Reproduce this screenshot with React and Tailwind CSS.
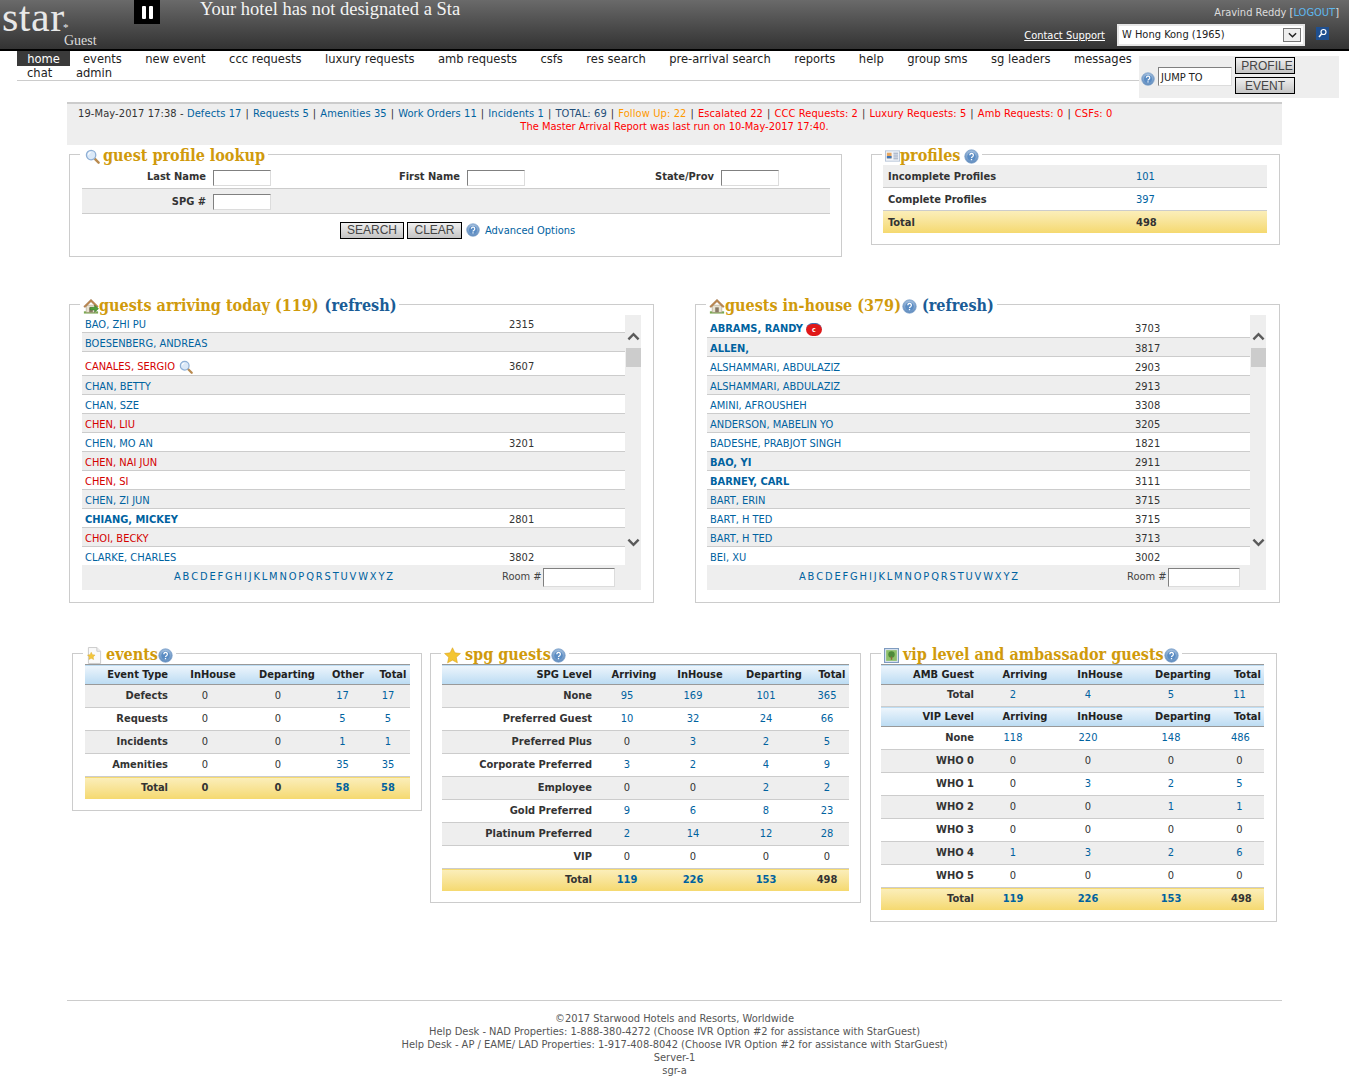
import React from "react";

const sans = "font-['DejaVu_Sans_Condensed','DejaVu_Sans',sans-serif]";
const serif = "font-['DejaVu_Serif_Condensed','DejaVu_Serif',serif]";

function Help({ className = "" }) {
  return (
    <svg viewBox="0 0 16 16" className={"inline-block shrink-0 " + className}>
      <defs>
        <radialGradient id="hg" cx="0.5" cy="0.35" r="0.7">
          <stop offset="0" stopColor="#c4d8ee" />
          <stop offset="1" stopColor="#4f7fb6" />
        </radialGradient>
      </defs>
      <circle cx="8" cy="8" r="7.2" fill="url(#hg)" stroke="#7fa3cc" strokeWidth="0.8" />
      <circle cx="8" cy="8" r="4.6" fill="#5a8cc4" />
      <path d="M6.2 6.6a1.9 1.9 0 1 1 2.9 1.6c-.7.4-1.1.7-1.1 1.5" fill="none" stroke="#fff" strokeWidth="1.3" />
      <rect x="7.3" y="10.6" width="1.4" height="1.4" fill="#fff" />
    </svg>
  );
}

function Magnifier({ className = "" }) {
  return (
    <svg viewBox="0 0 16 16" className={"inline-block shrink-0 " + className}>
      <line x1="10" y1="10" x2="14.5" y2="14.5" stroke="#b98a4e" strokeWidth="2.6" strokeLinecap="round" />
      <circle cx="6.5" cy="6.5" r="5" fill="#dbe9f8" stroke="#8fb0d6" strokeWidth="1.4" />
      <path d="M3.6 6a3 3 0 0 1 2.4-2.4" stroke="#fff" strokeWidth="1.2" fill="none" />
    </svg>
  );
}

function House({ arrow, className = "" }) {
  return (
    <svg viewBox="0 0 18 18" className={"inline-block shrink-0 " + className}>
      <rect x="1" y="15" width="16" height="2.5" fill="#7aa84f" />
      <rect x="3.5" y="8" width="11" height="8" fill="#e8e2d2" stroke="#a89a80" strokeWidth="0.6" />
      <path d="M0.8 9.5 9 1.5l8.2 8-1.4 1.2L9 4.2 2.2 10.7z" fill="#c08a52" stroke="#8e5f33" strokeWidth="0.5" />
      <rect x="7" y="10.5" width="4" height="5.5" fill="#8a7a66" />
      {arrow && <path d="M8 10.5h5V8l4.5 4-4.5 4v-2.5H8z" fill="#4f9e3a" stroke="#2f6e22" strokeWidth="0.5" />}
    </svg>
  );
}

function Card({ className = "" }) {
  return (
    <svg viewBox="0 0 16 14" className={"inline-block shrink-0 " + className}>
      <rect x="0.5" y="1.5" width="15" height="11" fill="#f2f5fa" stroke="#b7c4d8" />
      <rect x="2" y="3.5" width="5" height="6" fill="#e8a860" />
      <rect x="2" y="7" width="5" height="2.5" fill="#3f74b5" />
      <path d="M9 4h5M9 6h5M9 8h5M9 10h5" stroke="#8e9db5" />
    </svg>
  );
}

function DocStar({ className = "" }) {
  return (
    <svg viewBox="0 0 16 18" className={"inline-block shrink-0 " + className}>
      <path d="M1.5.5h9l4 4v13h-13z" fill="#fafafa" stroke="#c9c9c9" />
      <path d="M10.5.5v4h4" fill="#eee" stroke="#c9c9c9" />
      <path d="M4.5 5.5l1.3 2.6 2.8.4-2 2 .5 2.8-2.6-1.3-2.5 1.3.5-2.8-2-2 2.8-.4z" fill="#f3c63c" stroke="#d7a31c" strokeWidth="0.4" />
    </svg>
  );
}

function Star({ className = "" }) {
  return (
    <svg viewBox="0 0 18 18" className={"inline-block shrink-0 " + className}>
      <path d="M9 .8l2.5 5.4 5.9.7-4.4 4 1.2 5.9L9 13.900l-5.2 2.900L5 10.900.6 6.900l5.900-.7z" fill="#f4c531" stroke="#d9a21b" strokeWidth="0.6" />
    </svg>
  );
}

function Pic({ className = "" }) {
  return (
    <svg viewBox="0 0 14 14" className={"inline-block shrink-0 " + className}>
      <rect x="0.5" y="0.5" width="13" height="13" fill="#dce6f2" stroke="#7f9cc0" />
      <rect x="2" y="2" width="10" height="10" fill="#8fc06a" />
      <circle cx="7" cy="6" r="3" fill="#4d8a3a" />
      <rect x="6.3" y="8" width="1.4" height="3" fill="#8a6a3a" />
    </svg>
  );
}

function Chevron({ up }) {
  return (
    <svg viewBox="0 0 14 9" className="w-[13px] h-[9px] block">
      <path d={up ? "M1.5 7.5 7 2l5.5 5.5" : "M1.5 1.5 7 7l5.5-5.5"} fill="none" stroke="#5a5a5a" strokeWidth="2.6" />
    </svg>
  );
}

function Box({ title, className = "", children }) {
  return (
    <fieldset className={"border border-[#cccccc] box-border shrink-0 " + className}>
      <legend className={"ml-[10px] px-[3px] h-[22px] pt-[4px] flex items-center whitespace-nowrap " + serif}>{title}</legend>
      {children}
    </fieldset>
  );
}

const Gold = ({ children, className = "" }) => (
  <span className={"font-bold text-[#d09a0c] text-[16px] leading-[20px] " + className}>{children}</span>
);

function L({ children, c = "text-[#00629f]", className = "" }) {
  return <span className={c + " " + className}>{children}</span>;
}

const Sep = () => <span className="text-[#333] mx-[4px]">|</span>;

const lookupInput = "border border-[#808080] border-r-[#dcdcdc] border-b-[#dcdcdc] bg-white h-[14px] w-[56px] box-content";

function Field({ label }) {
  return (
    <div className="w-[254px] shrink-0 flex items-center pt-[2px]">
      <span className="w-[124px] text-right font-bold text-[#333] mr-[7px]">{label}</span>
      <span className={lookupInput} />
    </div>
  );
}

const btn = "border border-black bg-gradient-to-b from-[#f0f0f0] to-[#c4c4c4] text-[#444] text-[12px] leading-none flex items-center justify-center font-['Liberation_Sans',sans-serif]";

function Rows({ data, nameW }) {
  return (
    <div className="flex-1 overflow-hidden h-[250px]">
      {data.map((r, i) => (
        <div
          key={i}
          className={"flex items-center border-b border-[#cccccc] box-border pl-[3px] " + (i % 2 ? "bg-[#eeeeee]" : "bg-white")}
          style={{ height: r.h || 19, paddingTop: r.pt === undefined ? 5 : r.pt }}
        >
          <div style={{ width: nameW }} className={"flex items-center shrink-0 " + (r.red ? "text-[#d40000]" : "text-[#00629f]") + (r.b ? " font-bold" : "")}>
            {r.n}
            {r.mag && <Magnifier className="w-[14px] h-[14px] ml-[4px]" />}
            {r.c && (
              <span className="ml-[3px] w-[16px] h-[13px] rounded-full bg-[#e01818] text-white text-[7px] leading-[13px] text-center font-bold border-t border-[#3f74b5]">c</span>
            )}
          </div>
          <div className="text-[#333]">{r.r}</div>
        </div>
      ))}
    </div>
  );
}

function Scroll() {
  return (
    <div className="w-[16px] bg-[#eeeeee] flex flex-col items-center pt-[17px] pb-[18px] h-[250px]">
      <Chevron up />
      <div className="w-[15px] h-[19px] bg-[#cccccc] mt-[7px]" />
      <div className="mt-auto"><Chevron /></div>
    </div>
  );
}

function ListBox({ title, data, nameW, inner = "ml-[12px]" }) {
  return (
    <Box title={title} className="w-[585px] h-[310px]">
      <div className={inner + " w-[559px]"}>
        <div className="flex">
          <Rows data={data} nameW={nameW} />
          <Scroll />
        </div>
        <div className="h-[25px] bg-[#eeeeee] flex items-center text-[#333]">
          <div className="ml-[92px] w-[328px] flex text-[#00629f] text-[11px] [word-spacing:-1.3px]">
            A B C D E F G H I J K L M N O P Q R S T U V W X Y Z
          </div>
          <span className="text-[#444] w-[41px]">Room #</span>
          <span className="border border-[#808080] border-r-[#dcdcdc] border-b-[#dcdcdc] bg-white h-[17px] w-[70px] box-content" />
        </div>
      </div>
    </Box>
  );
}

const head = "bg-gradient-to-b from-[#edf5fc] to-[#bcdcf3] border-t border-b border-[#999999] box-border";
const body = "border-b border-[#cccccc] box-border";
const total = "bg-gradient-to-b from-[#fbeeb9] to-[#f5d96f] border-t border-[#999999] box-border";

function Stat({ widths, pads, rows, className = "" }) {
  return (
    <table className={"table-fixed border-collapse " + className} style={{ width: widths.reduce((a, b) => a + b, 0) }}>
      <colgroup>
        {widths.map((w, i) => <col key={i} style={{ width: w }} />)}
      </colgroup>
      <tbody>
        {rows.map((r, i) => {
          if (r.head) {
            return (
              <tr key={i} className={head} style={{ height: 20 }}>
                {r.head.map((c, j) => (
                  <td key={j} className={(j ? "text-center" : "text-right") + " font-bold text-[#222] p-0 pt-[2px]"} style={j ? {} : { paddingRight: pads[0] }}>{c}</td>
                ))}
              </tr>
            );
          }
          return (
            <tr key={i} className={r.total ? total : body + (r.alt ? " bg-[#eeeeee]" : " bg-white")} style={{ height: r.total ? 22 : r.h || 23 }}>
              {r.v.map((c, j) => {
                const dark = j === 0 || c === "0" || (r.dark && j === r.v.length - 1);
                return (
                  <td
                    key={j}
                    className={(j ? "text-center " : "text-right ") + "p-0 " + (j === 0 || r.total ? "font-bold " : "") + (dark ? "text-[#333]" : "text-[#00629f]")}
                    style={{ paddingRight: pads[j] }}
                  >
                    {c}
                  </td>
                );
              })}
            </tr>
          );
        })}
      </tbody>
    </table>
  );
}

const arriving = [
  { n: "BAO, ZHI PU", r: "2315", h: 18, pt: 3 },
  { n: "BOESENBERG, ANDREAS" },
  { n: "CANALES, SERGIO", r: "3607", red: 1, mag: 1, h: 24, pt: 7 },
  { n: "CHAN, BETTY" },
  { n: "CHAN, SZE" },
  { n: "CHEN, LIU", red: 1 },
  { n: "CHEN, MO AN", r: "3201" },
  { n: "CHEN, NAI JUN", red: 1 },
  { n: "CHEN, SI", red: 1 },
  { n: "CHEN, ZI JUN" },
  { n: "CHIANG, MICKEY", r: "2801", b: 1 },
  { n: "CHOI, BECKY", red: 1 },
  { n: "CLARKE, CHARLES", r: "3802" },
];

const inhouse = [
  { n: "ABRAMS, RANDY", r: "3703", b: 1, c: 1, h: 23, pt: 7 },
  { n: "ALLEN,", r: "3817", b: 1 },
  { n: "ALSHAMMARI, ABDULAZIZ", r: "2903" },
  { n: "ALSHAMMARI, ABDULAZIZ", r: "2913" },
  { n: "AMINI, AFROUSHEH", r: "3308" },
  { n: "ANDERSON, MABELIN YO", r: "3205" },
  { n: "BADESHE, PRABJOT SINGH", r: "1821" },
  { n: "BAO, YI", r: "2911", b: 1 },
  { n: "BARNEY, CARL", r: "3111", b: 1 },
  { n: "BART, ERIN", r: "3715" },
  { n: "BART, H TED", r: "3715" },
  { n: "BART, H TED", r: "3713" },
  { n: "BEI, XU", r: "3002" },
];

const navTop = ["events", "new event", "ccc requests", "luxury requests", "amb requests", "csfs", "res search", "pre-arrival search", "reports", "help", "group sms", "sg leaders"];

const red = "text-[#ff0000]";

export default function App() {
  return (
    <div className={"w-[1349px] h-[1086px] bg-white text-[11px] overflow-hidden " + sans}>
      <header className="h-[51px] bg-gradient-to-b from-[#6a6a6a] to-[#333333] border-b-2 border-black box-border flex">
        <div className="w-[134px] pl-[2px] text-[#e8e8e8] font-['Liberation_Serif',serif] relative">
          <div className="text-[42px] leading-[34px] tracking-[0.5px]">star</div>
          <span className="absolute left-[63px] top-[22px] text-[11px] leading-[11px]">*</span>
          <div className="ml-[62px] mt-[-1px] text-[14px] leading-[16px] text-[#ddd]">Guest</div>
        </div>
        <div className="w-[26px] h-[24px] bg-black flex items-center justify-center gap-[3px]">
          <span className="w-[4px] h-[13px] bg-white rounded-[1px]" />
          <span className="w-[4px] h-[13px] bg-white rounded-[1px]" />
        </div>
        <div className="ml-[40px] text-[18.5px] leading-[18px] text-[#f4f4f4] font-['Liberation_Serif',serif]">Your hotel has not designated a Sta</div>
        <div className="ml-auto pr-[10px] flex flex-col items-end">
          <div className="mt-[6px] h-[14px] leading-[14px] text-[#dddddd]">Aravind Reddy [<span className="text-[#5fb8ee]">LOGOUT</span>]</div>
          <div className="flex items-center mt-[4px] h-[22px]">
            <span className="text-white underline mr-[12px] pt-[2px]">Contact Support</span>
            <div className="w-[188px] h-[22px] bg-white border-2 border-[#e6e6e6] box-border flex items-center justify-between pl-[3px] pr-[2px] text-[#222]">
              W Hong Kong (1965)
              <span className="w-[18px] h-[14px] border border-[#777] bg-[#eeeeee] flex items-center justify-center">
                <svg viewBox="0 0 10 6" className="w-[9px] h-[6px]"><path d="M1 1l4 4 4-4" fill="none" stroke="#222" strokeWidth="1.6" /></svg>
              </span>
            </div>
            <svg viewBox="0 0 13 13" className="w-[13px] h-[13px] ml-[11px] mr-[10px] mb-[4px]">
              <rect width="13" height="13" fill="#1f4f8f" />
              <circle cx="7.5" cy="5" r="2.5" fill="none" stroke="#fff" strokeWidth="1.2" />
              <path d="M5.5 7L3 10" stroke="#fff" strokeWidth="1.5" />
            </svg>
          </div>
        </div>
      </header>

      <div className="flex">
        <nav className="ml-[17px] w-[1122px] h-[30px] border-b border-[#cccccc] box-border flex flex-wrap content-start text-[#222] text-[12.8px] leading-[14px]">
          <span className="w-[53px] h-[15px] leading-[16px] bg-[#3a3a3a] text-white text-center mr-[3px]">home</span>
          {navTop.map((t) => (
            <span key={t} className="h-[15px] leading-[16px] px-[10px] mr-[3.5px]">{t}</span>
          ))}
          <span className="h-[15px] leading-[16px] pl-[10px]">messages</span>
          <span className="basis-full h-0" />
          <span className="w-[59px] pl-[10px]">chat</span>
          <span>admin</span>
        </nav>
        <div className="w-[200px] h-[42px] mt-[5px] bg-[#eeeeee] flex items-start pl-[2px] pt-[1px]">
          <Help className="w-[14px] h-[14px] mt-[15px]" />
          <span className="ml-[3px] mt-[10px] border border-[#808080] border-r-[#dcdcdc] border-b-[#dcdcdc] w-[70px] h-[17px] bg-white pl-[2px] leading-[20px] text-[#222] box-content">JUMP TO</span>
          <div className="ml-[3px] flex flex-col gap-[3px]">
            <span className={btn + " w-[60px] h-[17px] pl-[4px]"}>PROFILE</span>
            <span className={btn + " w-[60px] h-[17px]"}>EVENT</span>
          </div>
        </div>
      </div>

      <div className="ml-[67px] w-[1215px] h-[43px] mt-[4px] bg-[#eeeeee] border-t-2 border-[#cccccc] box-border text-center pt-[3px] leading-[13px]">
        <div className="text-left pl-[11px] text-[#333] whitespace-pre tracking-[0.11px]">
          19-May-2017 17:38 - <L>Defects 17</L><Sep /><L>Requests 5</L><Sep /><L>Amenities 35</L><Sep /><L>Work Orders 11</L><Sep /><L>Incidents 1</L><Sep />
          <L c="text-[#1f4e79]">TOTAL: 69</L><Sep /><L c="text-[#ff9900]">Follow Up: 22</L><Sep /><L c={red}>Escalated 22</L><Sep /><L c={red}>CCC Requests: 2</L><Sep /><L c={red}>Luxury Requests: 5</L><Sep /><L c={red}>Amb Requests: 0</L><Sep /><L c={red}>CSFs: 0</L>
        </div>
        <div className={red}>The Master Arrival Report was last run on 10-May-2017 17:40.</div>
      </div>

      <div className="flex ml-[69px] -mt-[2px]">
        <Box
          className="w-[773px] h-[114px]"
          title={<><Magnifier className="w-[15px] h-[15px] ml-[2px] mr-[3px]" /><Gold>guest profile lookup</Gold></>}
        >
          <div className="ml-[12px] w-[748px]">
            <div className="h-[24px] border-b border-[#cccccc] box-border flex items-center">
              <Field label="Last Name" />
              <Field label="First Name" />
              <Field label="State/Prov" />
            </div>
            <div className="h-[25px] bg-[#eeeeee] border-b border-[#cccccc] box-border flex items-center">
              <Field label="SPG #" />
            </div>
            <div className="flex items-center mt-[7px] ml-[258px]">
              <span className={btn + " w-[64px] h-[17px]"}>SEARCH</span>
              <span className={btn + " w-[55px] h-[17px] ml-[3px]"}>CLEAR</span>
              <Help className="w-[14px] h-[14px] ml-[4px] mr-[5px]" />
              <L className="pt-[2px]">Advanced Options</L>
            </div>
          </div>
        </Box>

        <Box
          className="ml-[29px] w-[409px] h-[102px]"
          title={<><Card className="w-[15px] h-[14px]" /><Gold>profiles</Gold><Help className="w-[15px] h-[15px] ml-[4px]" /></>}
        >
          <div className="ml-[11px] w-[384px]">
            <div className="h-[23px] pt-[2px] bg-[#eeeeee] border-b border-[#cccccc] box-border flex items-center pl-[5px]"><span className="w-[248px] font-bold text-[#333]">Incomplete Profiles</span><L>101</L></div>
            <div className="h-[23px] pt-[2px] bg-white border-b border-[#cccccc] box-border flex items-center pl-[5px]"><span className="w-[248px] font-bold text-[#333]">Complete Profiles</span><L>397</L></div>
            <div className="h-[22px] pt-[2px] bg-gradient-to-b from-[#fbeeb9] to-[#f5d96f] flex items-center pl-[5px] font-bold text-[#333]"><span className="w-[248px]">Total</span>498</div>
          </div>
        </Box>
      </div>

      <div className="flex ml-[69px] mt-[36px]">
        <ListBox
          nameW={424}
          data={arriving}
          title={<><House arrow className="w-[16px] h-[16px]" /><Gold>guests arriving today (119)</Gold><span className="ml-[6px] font-bold text-[16px] text-[#1a5c96]">(refresh)</span></>}
        />
        <div className="w-[41px] shrink-0" />
        <ListBox
          nameW={425}
          inner="ml-[11px]"
          data={inhouse}
          title={<><House className="w-[16px] h-[16px]" /><Gold>guests in-house (379)</Gold><Help className="w-[15px] h-[15px] ml-[1px]" /><span className="ml-[5px] font-bold text-[16px] text-[#1a5c96]">(refresh)</span></>}
        />
      </div>

      <div className="flex items-start mt-[39px] ml-[72px]">
        <Box
          className="w-[350px] h-[169px]"
          title={<><DocStar className="w-[15px] h-[17px] ml-[1px] mr-[4px]" /><Gold>events</Gold><Help className="w-[15px] h-[15px]" /></>}
        >
          <Stat
            className="ml-[12px]"
            widths={[87, 82, 66, 56, 34]}
            pads={[4, 16, 18, 11, 10]}
            rows={[
              { head: ["Event Type", "InHouse", "Departing", "Other", "Total"] },
              { alt: 1, v: ["Defects", "0", "0", "17", "17"] },
              { v: ["Requests", "0", "0", "5", "5"] },
              { alt: 1, v: ["Incidents", "0", "0", "1", "1"] },
              { v: ["Amenities", "0", "0", "35", "35"] },
              { total: 1, v: ["Total", "0", "0", "58", "58"] },
            ]}
          />
        </Box>
        <Box
          className="ml-[8px] w-[431px] h-[261px]"
          title={<><Star className="w-[17px] h-[17px] mr-[4px]" /><Gold>spg guests</Gold><Help className="w-[15px] h-[15px]" /></>}
        >
          <Stat
            className="ml-[11px]"
            widths={[159, 66, 66, 82, 34]}
            pads={[9, 14, 14, 16, 10]}
            rows={[
              { head: ["SPG Level", "Arriving", "InHouse", "Departing", "Total"] },
              { alt: 1, v: ["None", "95", "169", "101", "365"] },
              { v: ["Preferred Guest", "10", "32", "24", "66"] },
              { alt: 1, v: ["Preferred Plus", "0", "3", "2", "5"] },
              { v: ["Corporate Preferred", "3", "2", "4", "9"] },
              { alt: 1, v: ["Employee", "0", "0", "2", "2"] },
              { v: ["Gold Preferred", "9", "6", "8", "23"] },
              { alt: 1, v: ["Platinum Preferred", "2", "14", "12", "28"] },
              { v: ["VIP", "0", "0", "0", "0"] },
              { total: 1, dark: 1, v: ["Total", "119", "226", "153", "498"] },
            ]}
          />
        </Box>
        <Box
          className="ml-[9px] w-[407px] h-[280px]"
          title={<><Pic className="w-[15px] h-[15px] mr-[4px]" /><Gold>vip level and ambassador guests</Gold><Help className="w-[15px] h-[15px]" /></>}
        >
          <Stat
            className="ml-[10px]"
            widths={[104, 80, 70, 96, 33]}
            pads={[11, 24, 24, 24, 16]}
            rows={[
              { head: ["AMB Guest", "Arriving", "InHouse", "Departing", "Total"] },
              { alt: 1, h: 22, v: ["Total", "2", "4", "5", "11"] },
              { head: ["VIP Level", "Arriving", "InHouse", "Departing", "Total"] },
              { v: ["None", "118", "220", "148", "486"] },
              { alt: 1, v: ["WHO 0", "0", "0", "0", "0"] },
              { v: ["WHO 1", "0", "3", "2", "5"] },
              { alt: 1, v: ["WHO 2", "0", "0", "1", "1"] },
              { v: ["WHO 3", "0", "0", "0", "0"] },
              { alt: 1, v: ["WHO 4", "1", "3", "2", "6"] },
              { v: ["WHO 5", "0", "0", "0", "0"] },
              { total: 1, dark: 1, v: ["Total", "119", "226", "153", "498"] },
            ]}
          />
        </Box>
      </div>

      <footer className="ml-[67px] w-[1215px] mt-[78px] border-t border-[#cccccc] pt-[11px] text-center text-[#555] leading-[13px]">
        <div>©2017 Starwood Hotels and Resorts, Worldwide</div>
        <div>Help Desk - NAD Properties: 1-888-380-4272 (Choose IVR Option #2 for assistance with StarGuest)</div>
        <div>Help Desk - AP / EAME/ LAD Properties: 1-917-408-8042 (Choose IVR Option #2 for assistance with StarGuest)</div>
        <div>Server-1</div>
        <div>sgr-a</div>
      </footer>
    </div>
  );
}
